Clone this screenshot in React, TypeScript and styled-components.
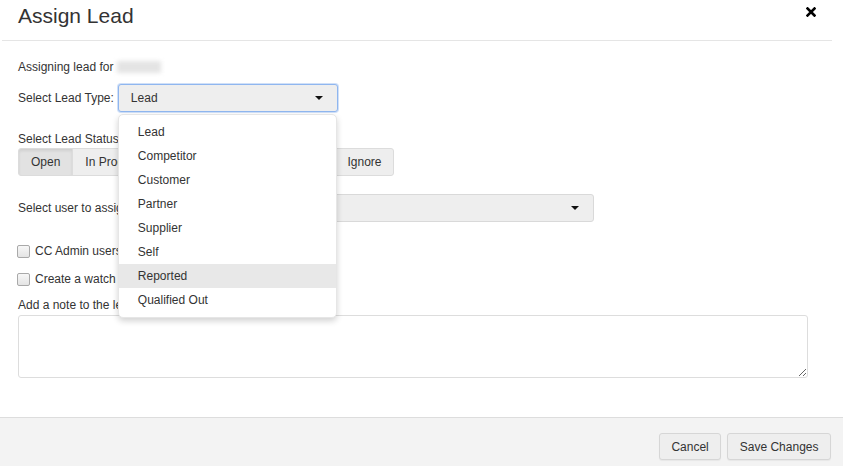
import { createGlobalStyle, styled } from "styled-components";

const GlobalStyle = createGlobalStyle`
  html, body {
    margin: 0;
    padding: 0;
    background: #fff;
  }
  body {
    font-family: "Liberation Sans", Arial, sans-serif;
    font-size: 12px;
    color: #333;
  }
`;

const Modal = styled.div`
  width: 843px;
  height: 466px;
  display: flex;
  flex-direction: column;
  background: #fff;
  overflow: hidden;
`;

const Header = styled.div`
  height: 40px;
  margin: 0 11px 0 2px;
  padding: 0 0 0 16px;
  border-bottom: 1px solid #e5e5e5;
  display: flex;
  align-items: flex-start;
  justify-content: space-between;
`;

const Title = styled.h4`
  margin: 0;
  padding-top: 4px;
  font-size: 21px;
  font-weight: normal;
  line-height: 24px;
  color: #333;
`;

const Close = styled.button`
  border: 0;
  background: none;
  padding: 0;
  margin: 7px 16px 0 0;
  width: 10px;
  height: 10px;
  display: flex;
  cursor: pointer;
`;

const Body = styled.div`
  flex: 1;
  padding: 0 36px 0 18px;
  display: flex;
  flex-direction: column;
`;

const Line = styled.div<{ $top: number }>`
  margin-top: ${(p) => p.$top}px;
  height: 16px;
  line-height: 16px;
  display: flex;
  align-items: center;
  gap: 4px;
`;

const Blurred = styled.span`
  display: inline-block;
  width: 44px;
  height: 12px;
  background: #e4e4e4;
  filter: blur(2px);
`;

const Row = styled.div<{ $top: number }>`
  margin-top: ${(p) => p.$top}px;
  display: flex;
  align-items: center;
  gap: 4px;
`;

const SelectWrap = styled.div<{ $width: number }>`
  position: relative;
  width: ${(p) => p.$width}px;
`;

const Select = styled.div<{ $focused?: boolean }>`
  height: 28px;
  box-sizing: border-box;
  display: flex;
  align-items: center;
  justify-content: space-between;
  padding: 0 12px;
  background: #eee;
  border: 1px solid ${(p) => (p.$focused ? "#8fb6ef" : "#d9d9d9")};
  box-shadow: ${(p) =>
    p.$focused ? "0 0 0 1px rgba(120, 165, 235, 0.35)" : "none"};
  border-radius: 3px;
  color: #333;
`;

const Caret = styled.span`
  width: 0;
  height: 0;
  border-left: 4px solid transparent;
  border-right: 4px solid transparent;
  border-top: 4px solid #111;
  margin-right: 2px;
`;

const Menu = styled.ul`
  position: absolute;
  top: 30px;
  left: 0;
  width: 219px;
  box-sizing: border-box;
  margin: 0;
  padding: 5px 0;
  list-style: none;
  background: #fff;
  border: 1px solid #e6e6e6;
  border-radius: 5px;
  box-shadow: 0 3px 6px rgba(0, 0, 0, 0.18);
  z-index: 10;
`;

const MenuItem = styled.li<{ $active?: boolean }>`
  height: 24px;
  line-height: 24px;
  padding: 0 19px;
  background: ${(p) => (p.$active ? "#e8e8e8" : "transparent")};
  color: #333;
`;

const Group = styled.div`
  margin-top: 1px;
  display: flex;
  height: 28px;
`;

const GroupButton = styled.button<{ $active?: boolean; $pad: number }>`
  font: inherit;
  color: #333;
  height: 28px;
  padding: 0 ${(p) => p.$pad}px;
  background: ${(p) => (p.$active ? "#e2e2e2" : "#eee")};
  border: 1px solid #dcdcdc;
  margin-left: -1px;
  box-shadow: ${(p) =>
    p.$active ? "inset 0 2px 3px rgba(0, 0, 0, 0.08)" : "none"};
  &:first-child {
    margin-left: 0;
    border-radius: 3px 0 0 3px;
  }
  &:last-child {
    border-radius: 0 3px 3px 0;
  }
`;

const CheckRow = styled.label<{ $top: number }>`
  margin-top: ${(p) => p.$top}px;
  height: 20px;
  display: flex;
  align-items: center;
  gap: 5px;
`;

const Box = styled.span`
  width: 11px;
  height: 11px;
  margin-left: -1px;
  border: 1px solid #a9a9a9;
  border-radius: 2px;
  background: linear-gradient(#f7f7f7, #e4e4e4);
`;

const Note = styled.textarea`
  margin-top: 2px;
  width: 790px;
  height: 63px;
  box-sizing: border-box;
  border: 1px solid #ddd;
  border-radius: 3px;
  font: inherit;
  resize: vertical;
`;

const Footer = styled.div`
  height: 49px;
  flex-shrink: 0;
  border-top: 1px solid #ddd;
  background: #f3f3f3;
  display: flex;
  justify-content: flex-end;
  align-items: flex-start;
  gap: 6px;
  padding: 15px 12px 0 0;
  box-sizing: border-box;
`;

const FooterButton = styled.button`
  font: inherit;
  font-size: 12px;
  color: #333;
  height: 27px;
  padding: 0 11.5px;
  background: #eee;
  border: 1px solid #d6d6d6;
  border-radius: 3px;
  box-shadow: 0 1px 1px rgba(0, 0, 0, 0.05);
`;

const leadTypes = [
  "Lead",
  "Competitor",
  "Customer",
  "Partner",
  "Supplier",
  "Self",
  "Reported",
  "Qualified Out",
];

export default function App() {
  return (
    <Modal>
      <GlobalStyle />
      <Header>
        <Title>Assign Lead</Title>
        <Close aria-label="Close">
          <svg width="10" height="10" viewBox="0 0 10 10">
            <path
              d="M1.5 1.5 L8.5 8.5 M8.5 1.5 L1.5 8.5"
              stroke="#000"
              strokeWidth="2.6"
              strokeLinecap="square"
            />
          </svg>
        </Close>
      </Header>
      <Body>
        <Line $top={18}>
          Assigning lead for <Blurred />
        </Line>
        <Row $top={9}>
          Select Lead Type:
          <SelectWrap $width={220}>
            <Select $focused>
              Lead
              <Caret />
            </Select>
            <Menu>
              {leadTypes.map((t) => (
                <MenuItem key={t} $active={t === "Reported"}>
                  {t}
                </MenuItem>
              ))}
            </Menu>
          </SelectWrap>
        </Row>
        <Line $top={19}>Select Lead Status:</Line>
        <Group>
          <GroupButton $active $pad={12}>
            Open
          </GroupButton>
          <GroupButton $pad={12}>In Progress</GroupButton>
          <GroupButton $pad={18}>Qualified</GroupButton>
          <GroupButton $pad={18}>Converted</GroupButton>
          <GroupButton $pad={11}>Ignore</GroupButton>
        </Group>
        <Row $top={18}>
          Select user to assign lead to:
          <SelectWrap $width={418}>
            <Select>
              &nbsp;
              <Caret />
            </Select>
          </SelectWrap>
        </Row>
        <CheckRow $top={19}>
          <Box />
          CC Admin users on this assignment
        </CheckRow>
        <CheckRow $top={8}>
          <Box />
          Create a watch on this lead
        </CheckRow>
        <Line $top={8}>Add a note to the lead:</Line>
        <Note />
      </Body>
      <Footer>
        <FooterButton>Cancel</FooterButton>
        <FooterButton>Save Changes</FooterButton>
      </Footer>
    </Modal>
  );
}
